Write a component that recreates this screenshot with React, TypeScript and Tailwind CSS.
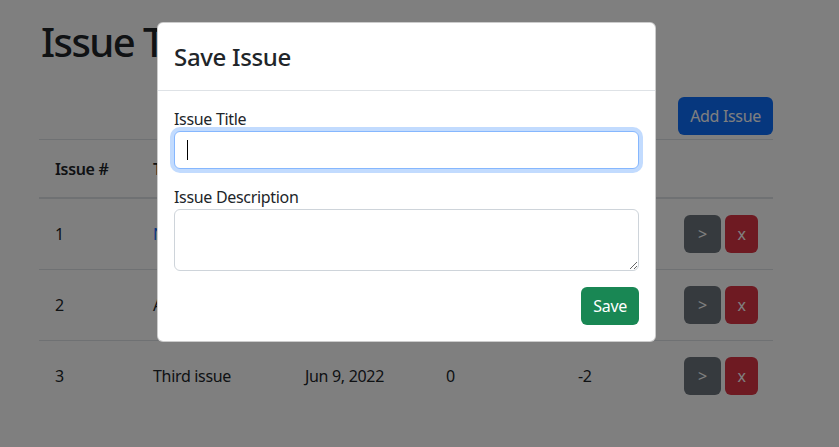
import React from "react";

const rows = [
  { id: 1, title: "New issue", link: true, date: "Jun 7, 2022", votes: "3", score: "1" },
  { id: 2, title: "Another issue", link: false, date: "Jun 8, 2022", votes: "1", score: "0" },
  { id: 3, title: "Third issue", link: false, date: "Jun 9, 2022", votes: "0", score: "-2" },
];

export default function App() {
  return (
    <div className="relative w-[839px] h-[447px] overflow-hidden bg-white text-[#212529] font-['Noto_Sans','Open_Sans',sans-serif] text-base leading-6 tracking-[-0.02em]">
      <div className="pl-[39px] pt-[18px] w-[773px]">
        <h1 className="text-[40px] leading-[48px] font-medium tracking-[-0.04em] pl-[2px]">Issue Tracker</h1>
        <div className="flex justify-end mt-[31px]">
          <button className="h-[38px] px-3 rounded-md bg-[#0d6efd] text-white">Add Issue</button>
        </div>
        <table className="mt-1 w-full table-fixed border-t border-[#dee2e6] text-left">
          <colgroup>
            <col className="w-[98px]" />
            <col className="w-[152px]" />
            <col className="w-[141px]" />
            <col className="w-[132px]" />
            <col className="w-[106px]" />
            <col className="w-[105px]" />
          </colgroup>
          <thead>
            <tr className="border-b-2 border-[#dee2e6]">
              <th className="px-4 pt-[17px] pb-4 font-semibold">Issue #</th>
              <th className="px-4 pt-[17px] pb-4 font-semibold">Title</th>
              <th className="px-4 pt-[17px] pb-4 font-semibold">Created</th>
              <th className="px-4 pt-[17px] pb-4 font-semibold">Votes</th>
              <th className="px-4 pt-[17px] pb-4 font-semibold">Score</th>
              <th className="px-4 pt-[17px] pb-4 font-semibold"></th>
            </tr>
          </thead>
          <tbody>
            {rows.map((r, i) => (
              <tr key={r.id} className={i < rows.length - 1 ? "border-b border-[#dee2e6]" : ""}>
                <td className="px-4 py-4 align-middle">{r.id}</td>
                <td className={"px-4 py-4 align-middle " + (r.link ? "text-[#0d6efd]" : "")}>{r.title}</td>
                <td className="px-4 py-4 align-middle">{r.date}</td>
                <td className="px-4 py-4 align-middle">{r.votes}</td>
                <td className="px-4 py-4 align-middle">{r.score}</td>
                <td className="pl-4 pr-0 py-4 align-middle">
                  <div className="flex gap-1">
                    <button className="h-[38px] w-[37px] flex items-center justify-center rounded-md bg-[#6c757d] text-white">&gt;</button>
                    <button className="h-[38px] w-[33px] flex items-center justify-center rounded-md bg-[#dc3545] text-white">x</button>
                  </div>
                </td>
              </tr>
            ))}
          </tbody>
        </table>
      </div>

      <div className="absolute inset-0 bg-black/50" />

      <div className="absolute left-[157px] top-[22px] w-[499px] bg-white rounded-[6px] border border-black/20">
        <div className="px-4 py-4 border-b border-[#dee2e6]">
          <h5 className="text-2xl leading-[35px] font-medium">Save Issue</h5>
        </div>
        <div className="p-4">
          <label className="block">Issue Title</label>
          <div className="relative">
            <input
              type="text"
              className="block w-full h-[38px] px-3 rounded-md border border-[#86b7fe] bg-white outline-none caret-transparent shadow-[0_0_0_4px_rgba(13,110,253,0.25)]"
            />
            <span className="absolute left-[13px] top-[9px] h-5 w-px bg-black" />
          </div>
          <label className="block mt-4">Issue Description</label>
          <textarea
            rows={2}
            className="block w-full h-[62px] px-3 py-1.5 rounded-md border border-[#ced4da] bg-white outline-none"
          />
          <div className="flex justify-end mt-4">
            <button className="h-[38px] px-3 rounded-md bg-[#198754] text-white">Save</button>
          </div>
        </div>
      </div>
    </div>
  );
}
